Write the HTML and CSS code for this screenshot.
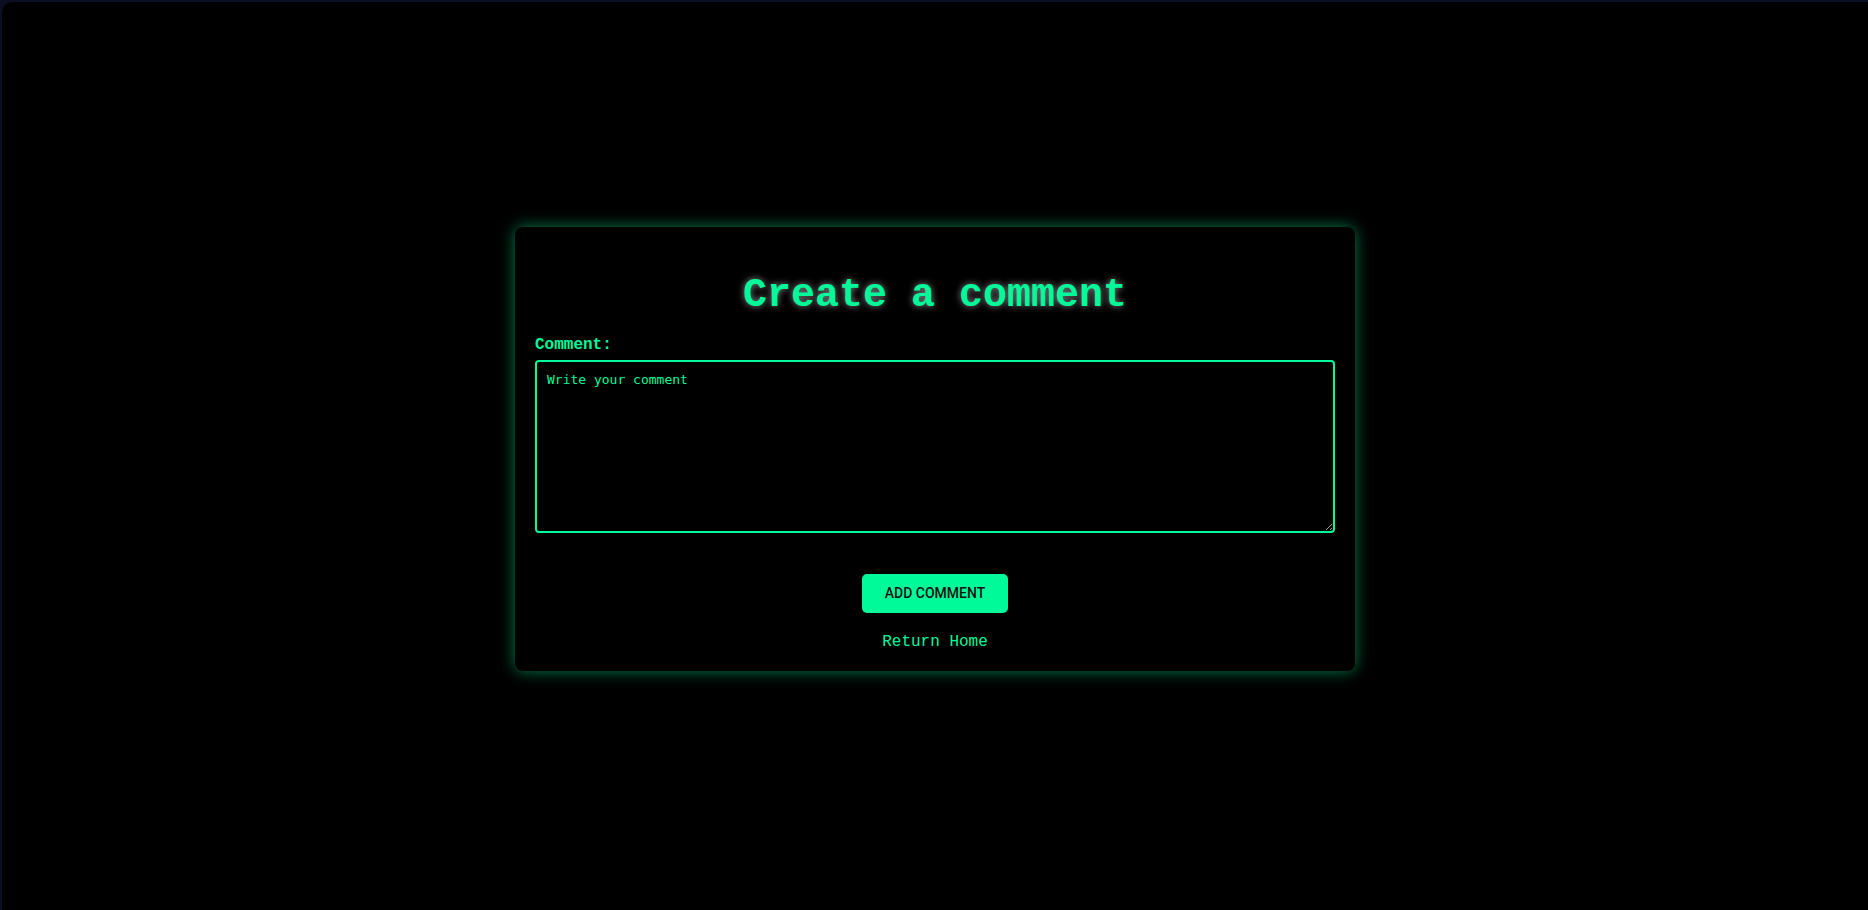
FILE: index.html
```html
<!DOCTYPE html>
<html lang="en">
<head>
    <meta charset="UTF-8">
    <meta name="viewport" content="width=device-width, initial-scale=1.0">
    <title>Create a comment</title>
    <link rel="stylesheet" href="styles.css">
</head>
<body>
    <div class="screen">
        <div class="card">
            <h1>Create a comment</h1>
            <form class="comment-form">
                <label for="comment">Comment:</label>
                <textarea id="comment" placeholder="Write your comment"></textarea>
                <button type="submit">ADD COMMENT</button>
            </form>
            <a href="#" class="home-link">Return Home</a>
        </div>
    </div>
</body>
</html>
```

FILE: styles.css
```css
html {
    background: #0b0f22;
}

body {
    margin: 0;
    padding: 2px 0 0 2px;
    font-family: "Liberation Mono", "Courier New", monospace;
    color: #00fa9a;
    overflow: hidden;
}

.screen {
    height: 908px;
    background: #000;
    border-radius: 10px 0 0 0;
    display: flex;
    align-items: center;
    justify-content: center;
    padding-bottom: 14px;
    box-sizing: border-box;
}

.card {
    width: 840px;
    padding: 20px 20px 20px;
    box-sizing: border-box;
    background: #000;
    border-radius: 8px;
    box-shadow: 0 0 16px rgba(0, 250, 154, 0.5);
    text-align: center;
}

h1 {
    font-size: 40px;
    font-weight: bold;
    margin: 26px 0 18px;
    text-shadow: 0 0 7px rgba(255, 255, 255, 0.55);
}

.comment-form {
    display: flex;
    flex-direction: column;
    align-items: center;
}

.comment-form label {
    align-self: flex-start;
    font-size: 16px;
    font-weight: bold;
    margin-bottom: 6px;
}

textarea {
    width: 100%;
    height: 173px;
    box-sizing: border-box;
    padding: 10px;
    background: #000;
    color: #00fa9a;
    border: 2px solid #00fa9a;
    border-radius: 4px;
    font-family: "DejaVu Sans Mono", monospace;
    font-size: 13px;
    outline: none;
}

textarea::placeholder {
    color: #00fa9a;
    opacity: 1;
}

button {
    margin-top: 41px;
    padding: 12px 23px;
    background: #00fa9a;
    color: #111;
    border: none;
    border-radius: 5px;
    font-family: Roboto, "Liberation Sans", Arial, sans-serif;
    font-weight: 500;
    font-size: 14px;
    line-height: 15px;
    cursor: pointer;
}

.home-link {
    display: inline-block;
    margin-top: 20px;
    font-size: 16px;
    color: #00fa9a;
    text-decoration: none;
}
```
